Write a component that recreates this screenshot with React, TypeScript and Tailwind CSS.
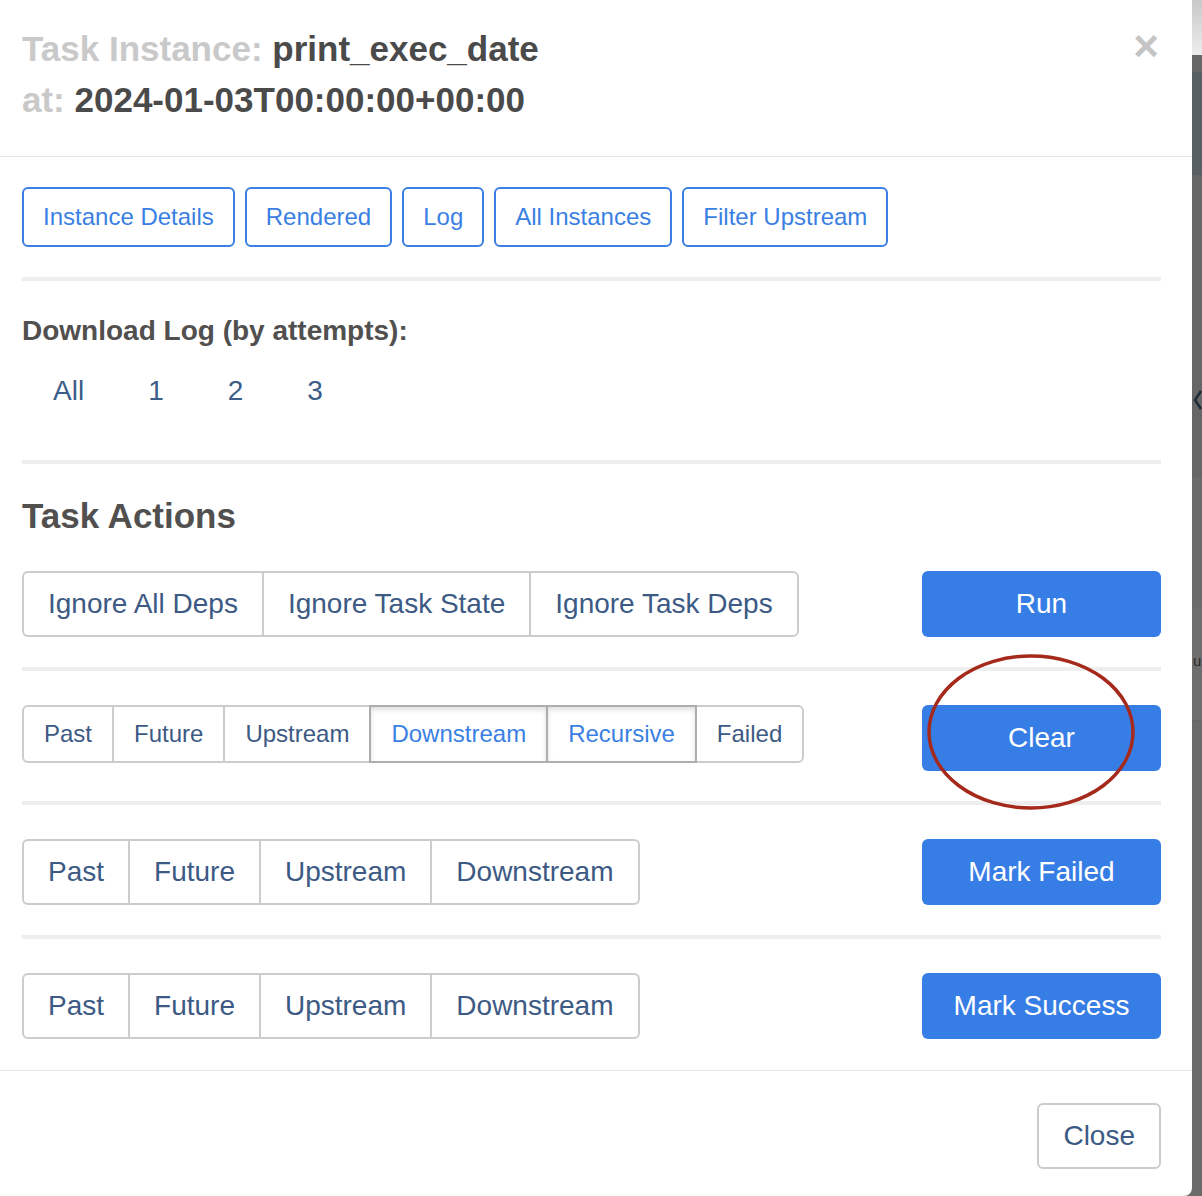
const navBtns = ['Instance Details', 'Rendered', 'Log', 'All Instances', 'Filter Upstream']

type Seg = { label: string; active?: boolean }

function Group({ items, small }: { items: Seg[]; small?: boolean }) {
  return (
    <div className="flex">
      {items.map((s, i) => (
        <button
          key={s.label}
          className={[
            'border-2 bg-white',
            small ? 'h-[58px] px-5 text-[24px]' : 'h-[66px] px-6 text-[28px]',
            i === 0 ? 'rounded-l-[6px]' : '-ml-[2px]',
            i === items.length - 1 ? 'rounded-r-[6px]' : '',
            s.active
              ? 'relative z-10 border-[#adadad] bg-[#ebebeb] text-[#3a7fe3] shadow-[inset_0_3px_5px_rgba(0,0,0,0.125)]'
              : 'border-[#cccccc] text-[#3c5a84]',
          ].join(' ')}
        >
          {s.label}
        </button>
      ))}
    </div>
  )
}

function ActionRow({ items, action, small }: { items: Seg[]; action: string; small?: boolean }) {
  return (
    <div className="flex items-start justify-between">
      <Group items={items} small={small} />
      <button className="h-[66px] w-[239px] rounded-[6px] bg-[#377de6] text-[28px] text-white">{action}</button>
    </div>
  )
}

function Hr({ className = '' }: { className?: string }) {
  return <div className={'h-[4px] bg-[#eeeeee] ' + className} />
}

export default function App() {
  return (
    <div className="relative flex h-[1196px] w-[1202px] overflow-hidden bg-[#6b6b6b] font-['Liberation_Sans',Arial,sans-serif]">
      <div className="flex w-[1192px] shrink-0 flex-col rounded-br-[8px] bg-white">
        {/* header */}
        <div className="flex items-start justify-between border-b border-[#e5e5e5] pb-[31px] pl-[22px] pr-[33px] pt-[23px]">
          <h4 className="text-[35px] font-bold leading-[51px] text-[#4a4a4a]">
            <span className="text-[#c9c9c9]">Task Instance: </span>print_exec_date
            <br />
            <span className="text-[#c9c9c9]">at: </span>2024-01-03T00:00:00+00:00
          </h4>
          <span className="mt-[-3px] text-[44px] font-bold leading-[51px] text-[#c4c4c4]">×</span>
        </div>

        {/* body */}
        <div className="pb-[31px] pl-[22px] pr-[31px] pt-[30px]">
          <div className="flex gap-[10px]">
            {navBtns.map((b) => (
              <button key={b} className="h-[60px] rounded-[6px] border-2 border-[#3a7fe3] px-[19px] text-[24px] text-[#3a7fe3]">
                {b}
              </button>
            ))}
          </div>
          <Hr className="mt-[30px]" />

          <p className="mt-[30px] text-[28px] font-bold leading-[40px] text-[#51504f]">Download Log (by attempts):</p>
          <div className="mt-[20px] -ml-[1px] flex text-[28px] leading-[40px] text-[#3b5d88]">
            {['All', '1', '2', '3'].map((a) => (
              <a key={a} href="#" className="px-[32px]">
                {a}
              </a>
            ))}
          </div>
          <Hr className="mt-[49px]" />

          <h4 className="mt-[32px] text-[35px] font-bold leading-[40px] text-[#51504f]">Task Actions</h4>

          <div className="mt-[35px]">
            <ActionRow
              items={[{ label: 'Ignore All Deps' }, { label: 'Ignore Task State' }, { label: 'Ignore Task Deps' }]}
              action="Run"
            />
          </div>
          <Hr className="mt-[30px]" />
          <div className="mt-[34px]">
            <ActionRow
              small
              items={[
                { label: 'Past' },
                { label: 'Future' },
                { label: 'Upstream' },
                { label: 'Downstream', active: true },
                { label: 'Recursive', active: true },
                { label: 'Failed' },
              ]}
              action="Clear"
            />
          </div>
          <Hr className="mt-[30px]" />
          <div className="mt-[34px]">
            <ActionRow
              items={[{ label: 'Past' }, { label: 'Future' }, { label: 'Upstream' }, { label: 'Downstream' }]}
              action="Mark Failed"
            />
          </div>
          <Hr className="mt-[30px]" />
          <div className="mt-[34px]">
            <ActionRow
              items={[{ label: 'Past' }, { label: 'Future' }, { label: 'Upstream' }, { label: 'Downstream' }]}
              action="Mark Success"
            />
          </div>
        </div>

        {/* footer */}
        <div className="flex justify-end border-t border-[#e5e5e5] pb-[27px] pr-[31px] pt-[32px]">
          <button className="h-[66px] rounded-[6px] border-2 border-[#cccccc] px-6 text-[28px] text-[#3c5a84]">Close</button>
        </div>
      </div>

      {/* backdrop sliver */}
      <div className="flex flex-1 flex-col">
        <div className="h-[55px] bg-gradient-to-b from-[#c8c8c8] to-[#eeeeee]" />
        <div className="h-[17px] bg-[#666666]" />
        <div className="h-[103px] bg-[#596064]" />
        <div className="h-[302px] bg-[#666666] pt-[214px]">
          <svg width="9" height="22" viewBox="0 0 9 22" className="ml-[1px]">
            <path d="M8 2 L2 11 L8 20" fill="none" stroke="#1e2b3a" strokeWidth="2.5" />
          </svg>
        </div>
        <div className="h-[130px] bg-[#6b6b6b]" />
        <div className="h-[113px] bg-[#6e6e6e] pl-[1px] pt-[46px] text-[15px] leading-none text-[#2a2a2a]">u</div>
        <div className="h-[2px] bg-[#676767]" />
        <div className="flex-1 bg-[#6b6b6b]" />
      </div>

      {/* annotation */}
      <svg className="pointer-events-none absolute left-[925px] top-[652px]" width="212" height="160" viewBox="0 0 212 160">
        <ellipse cx="106" cy="80" rx="102" ry="76" fill="none" stroke="#a52a1c" strokeWidth="3.5" />
      </svg>
    </div>
  )
}
